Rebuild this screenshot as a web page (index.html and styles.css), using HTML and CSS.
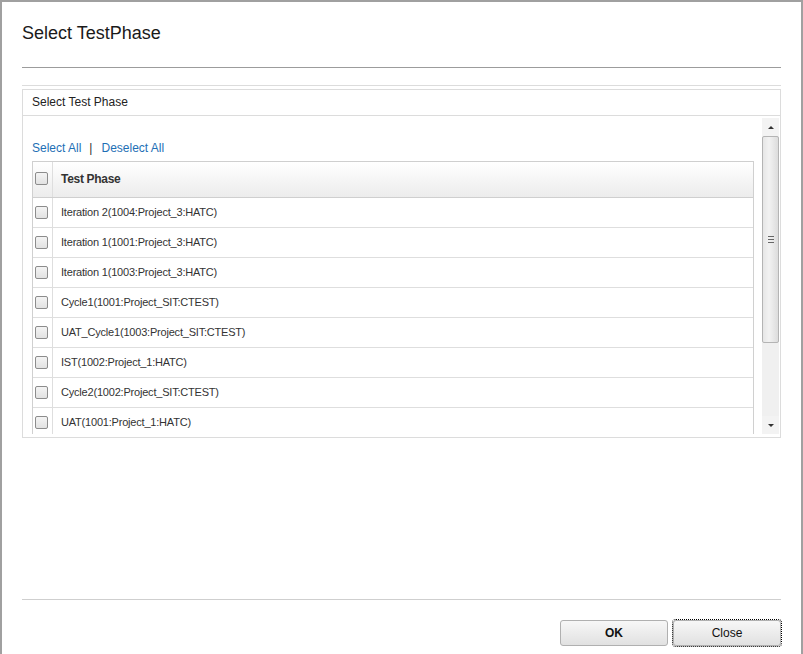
FILE: index.html
```html
<!DOCTYPE html>
<html>
<head>
<meta charset="utf-8">
<title>Select TestPhase</title>
<link rel="stylesheet" href="styles.css">
</head>
<body>
<div class="frame">
  <div class="title">Select TestPhase</div>
  <div class="rule-dark"></div>
  <div class="rule-light"></div>
  <div class="panel">
    <div class="panel-head">Select Test Phase</div>
    <div class="panel-body">
      <div class="viewport">
        <div class="links"><a class="link">Select All</a><span class="sep">|</span><a class="link">Deselect All</a></div>
        <div class="table">
          <div class="thead">
            <div class="cbcell"><span class="cb"></span></div>
            <div class="tcell th">Test Phase</div>
          </div>
          <div class="row"><div class="cbcell"><span class="cb"></span></div><div class="tcell">Iteration 2(1004:Project_3:HATC)</div></div>
          <div class="row"><div class="cbcell"><span class="cb"></span></div><div class="tcell">Iteration 1(1001:Project_3:HATC)</div></div>
          <div class="row"><div class="cbcell"><span class="cb"></span></div><div class="tcell">Iteration 1(1003:Project_3:HATC)</div></div>
          <div class="row"><div class="cbcell"><span class="cb"></span></div><div class="tcell">Cycle1(1001:Project_SIT:CTEST)</div></div>
          <div class="row"><div class="cbcell"><span class="cb"></span></div><div class="tcell">UAT_Cycle1(1003:Project_SIT:CTEST)</div></div>
          <div class="row"><div class="cbcell"><span class="cb"></span></div><div class="tcell">IST(1002:Project_1:HATC)</div></div>
          <div class="row"><div class="cbcell"><span class="cb"></span></div><div class="tcell">Cycle2(1002:Project_SIT:CTEST)</div></div>
          <div class="row"><div class="cbcell"><span class="cb"></span></div><div class="tcell">UAT(1001:Project_1:HATC)</div></div>
        </div>
      </div>
      <div class="scrollbar">
        <div class="sb-btn"><span class="arrow-up"></span></div>
        <div class="sb-thumb"><span class="grip"></span></div>
        <div class="sb-track"></div>
        <div class="sb-btn"><span class="arrow-down"></span></div>
      </div>
    </div>
  </div>
  <div class="spacer"></div>
  <div class="footer-rule"></div>
  <div class="buttons">
    <button class="btn btn-ok">OK</button>
    <button class="btn btn-close">Close</button>
  </div>
</div>
</body>
</html>
```

FILE: styles.css
```css
html, body {
  margin: 0;
  padding: 0;
  background: #fff;
}
body {
  font-family: "Liberation Sans", Arial, sans-serif;
  color: #222;
}
.frame {
  box-sizing: border-box;
  width: 803px;
  height: 654px;
  border-left: 2px solid #a0a0a0;
  border-top: 2px solid #a0a0a0;
  border-right: 2px solid #a0a0a0;
  padding: 20px 20px 0 20px;
  display: flex;
  flex-direction: column;
}
.title {
  font-size: 18px;
  line-height: 22px;
  height: 22px;
  color: #1a1a1a;
}
.rule-dark {
  margin-top: 23px;
  height: 1px;
  background: #9c9c9c;
}
.rule-light {
  margin-top: 17px;
  height: 1px;
  background: #dcdcdc;
}
.panel {
  margin-top: 3px;
  box-sizing: border-box;
  height: 349px;
  border: 1px solid #dcdcdc;
  display: flex;
  flex-direction: column;
}
.panel-head {
  height: 25px;
  line-height: 25px;
  font-size: 12px;
  color: #222;
  padding-left: 9px;
  border-bottom: 1px solid #dcdcdc;
  flex: none;
}
.panel-body {
  flex: 1;
  box-sizing: border-box;
  padding-bottom: 3px;
  display: flex;
  min-height: 0;
}
.viewport {
  flex: 1;
  overflow: hidden;
  padding: 25px 8px 0 9px;
}
.links {
  font-size: 12px;
  line-height: 14px;
  height: 14px;
  color: #333;
}
.link {
  color: #1e6fb5;
  cursor: pointer;
}
.sep {
  margin: 0 9px 0 8px;
  color: #333;
}
.table {
  margin-top: 6px;
  border-left: 1px solid #d0d0d0;
  border-right: 1px solid #d0d0d0;
}
.thead {
  display: flex;
  height: 37px;
  box-sizing: border-box;
  border-top: 1px solid #cfcfcf;
  border-bottom: 1px solid #cfcfcf;
  background: linear-gradient(to bottom, #ffffff, #ececec);
  padding-bottom: 2px;
}
.row {
  display: flex;
  height: 30px;
  box-sizing: border-box;
  border-bottom: 1px solid #dedede;
  background: #fff;
}
.cbcell {
  width: 17px;
  flex: none;
  border-right: 1px solid #dedede;
  display: flex;
  align-items: center;
  padding-left: 2px;
  box-sizing: content-box;
}
.thead .cbcell {
  margin-bottom: -2px;
  padding-bottom: 2px;
}
.cb {
  display: block;
  width: 11px;
  height: 11px;
  border: 1px solid #8c8c8c;
  border-radius: 2px;
  background: linear-gradient(to bottom, #f4f4f4, #e2e2e2);
}
.tcell {
  flex: 1;
  display: flex;
  align-items: center;
  padding-left: 8px;
  padding-bottom: 2px;
  font-size: 11px;
  letter-spacing: -0.2px;
  color: #333;
}
.th {
  font-size: 12px;
  font-weight: bold;
  letter-spacing: -0.3px;
  color: #333;
  padding-bottom: 0;
}
.scrollbar {
  width: 17px;
  margin: 2px 1px 0 0;
  display: flex;
  flex-direction: column;
  background: #f0f0f0;
  flex: none;
}
.sb-btn {
  height: 18px;
  flex: none;
  background: #f3f3f3;
  display: flex;
  align-items: center;
  justify-content: center;
}
.arrow-up {
  width: 0;
  height: 0;
  border-left: 3px solid transparent;
  border-right: 3px solid transparent;
  border-bottom: 3px solid #333;
}
.arrow-down {
  width: 0;
  height: 0;
  border-left: 3px solid transparent;
  border-right: 3px solid transparent;
  border-top: 3px solid #333;
}
.sb-thumb {
  height: 207px;
  flex: none;
  box-sizing: border-box;
  border: 1px solid #b4b4b4;
  border-radius: 2px;
  background: linear-gradient(to right, #e6e6e6, #f2f2f2 40%, #dcdcdc);
  display: flex;
  align-items: center;
  justify-content: center;
}
.grip {
  width: 6px;
  height: 5px;
  border-top: 1px solid #666;
  border-bottom: 1px solid #666;
  position: relative;
}
.grip::after {
  content: "";
  position: absolute;
  left: 0;
  right: 0;
  top: 2px;
  height: 1px;
  background: #666;
}
.sb-track {
  flex: 1;
  background: #f0f0f0;
}
.spacer {
  flex: 1;
}
.footer-rule {
  height: 1px;
  background: #cfcfcf;
}
.buttons {
  display: flex;
  justify-content: flex-end;
  gap: 5px;
  padding-top: 20px;
  height: 34px;
}
.btn {
  font-family: "Liberation Sans", Arial, sans-serif;
  font-size: 12px;
  color: #111;
  width: 108px;
  height: 26px;
  box-sizing: border-box;
  border: 1px solid #b0b0b0;
  border-radius: 3px;
  background: linear-gradient(to bottom, #f7f7f7, #e1e1e1);
  padding: 0;
}
.btn-ok {
  font-weight: bold;
}
.btn-close {
  outline: 1px dotted #000;
  outline-offset: 0;
}
```
